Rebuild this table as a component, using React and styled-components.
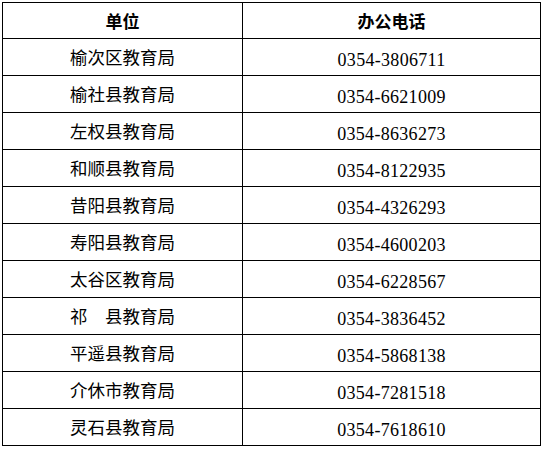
import React from 'react';
import styled, { createGlobalStyle } from 'styled-components';

const offices = [
  { name: '榆次区教育局', phone: '0354-3806711' },
  { name: '榆社县教育局', phone: '0354-6621009' },
  { name: '左权县教育局', phone: '0354-8636273' },
  { name: '和顺县教育局', phone: '0354-8122935' },
  { name: '昔阳县教育局', phone: '0354-4326293' },
  { name: '寿阳县教育局', phone: '0354-4600203' },
  { name: '太谷区教育局', phone: '0354-6228567' },
  { name: '祁　县教育局', phone: '0354-3836452' },
  { name: '平遥县教育局', phone: '0354-5868138' },
  { name: '介休市教育局', phone: '0354-7281518' },
  { name: '灵石县教育局', phone: '0354-7618610' }
];

const GlobalStyle = createGlobalStyle`
  body {
    margin: 0;
    background: #fff;
    font-family: "Noto Sans CJK SC", sans-serif;
    color: #000;
  }
`;

const Page = styled.div`
  padding: 2px 0 0 2px;
`;

const Table = styled.table`
  border-collapse: collapse;
  width: 539px;
  table-layout: fixed;
`;

const HeadCell = styled.th`
  height: 35px;
  padding: 0;
  border: 1px solid #000;
  font-family: "Noto Sans CJK SC", sans-serif;
  font-weight: 700;
  font-size: 17px;
  text-align: center;
  vertical-align: middle;
  line-height: 1;
  width: ${props => props.$width || 'auto'};
`;

const Cell = styled.td`
  height: 36px;
  padding: 0;
  border: 1px solid #000;
  text-align: center;
  vertical-align: middle;
  line-height: 1;
`;

const Name = styled.span`
  font-family: "Noto Sans CJK SC", sans-serif;
  font-size: 17.5px;
  font-weight: 400;
`;

const Phone = styled.span`
  font-family: "Liberation Serif", serif;
  font-size: 18px;
  letter-spacing: 0.3px;
  position: relative;
  top: 3px;
`;

export default function App() {
  return (
    <>
      <GlobalStyle />
      <Page>
        <Table>
          <thead>
            <tr>
              <HeadCell $width="239px">单位</HeadCell>
              <HeadCell>办公电话</HeadCell>
            </tr>
          </thead>
          <tbody>
            {offices.map((o, idx) => (
              <tr key={idx}>
                <Cell><Name>{o.name}</Name></Cell>
                <Cell><Phone>{o.phone}</Phone></Cell>
              </tr>
            ))}
          </tbody>
        </Table>
      </Page>
    </>
  );
}
